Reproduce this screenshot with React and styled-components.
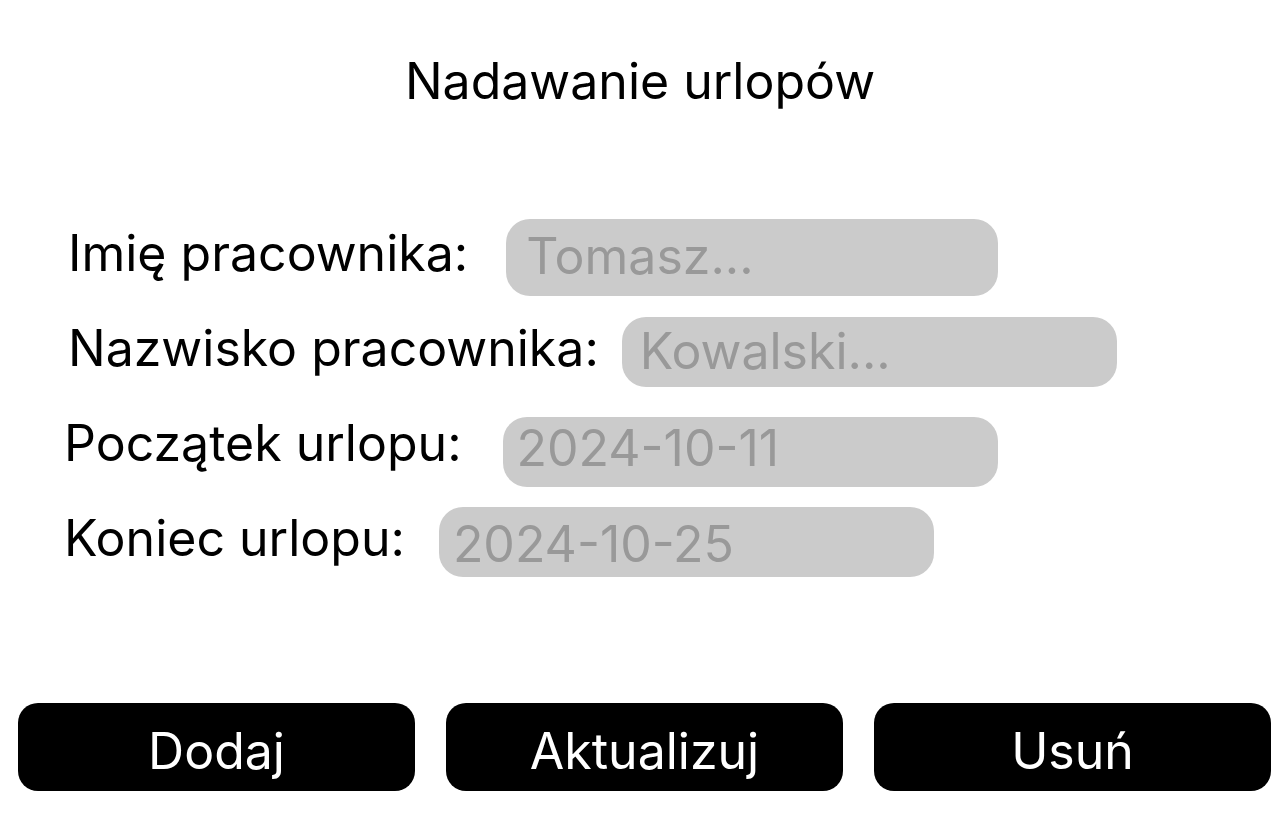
import React from "react";
import styled, { createGlobalStyle } from "styled-components";

const GlobalStyle = createGlobalStyle`
  * { box-sizing: border-box; }
  body {
    margin: 0;
    background: #ffffff;
    color: #000000;
    font-family: Inter, "Liberation Sans", sans-serif;
    font-size: 50px;
    line-height: 60px;
  }
`;

const Page = styled.main`
  min-height: 100vh;
  padding-top: 51px;
  padding-bottom: 40px;
`;

const Title = styled.h1`
  margin: 0;
  font-size: 50px;
  font-weight: 400;
  line-height: 60px;
  text-align: center;
`;

const Form = styled.form`
  display: flex;
  flex-direction: column;
`;

const Fields = styled.div`
  display: flex;
  flex-direction: column;
  padding: 108px 64px 0;
`;

const Row = styled.div`
  display: flex;
  align-items: flex-start;
  gap: ${({ $gap }) => $gap}px;
  margin-bottom: ${({ $after }) => $after}px;
  padding-left: ${({ $indent }) => $indent}px;
`;

const Label = styled.label`
  flex: none;
  padding-top: ${({ $drop }) => $drop}px;
  line-height: 60px;
`;

const Input = styled.input`
  flex: 0 1 ${({ $width }) => $width}px;
  min-width: 0;
  height: ${({ $height }) => $height}px;
  margin: ${({ $top }) => $top}px 0 0;
  padding: ${({ $pad }) => $pad};
  border: 0;
  border-radius: 24px;
  background: #cbcbcb;
  color: #000000;
  font: inherit;

  &::placeholder {
    color: #999999;
    opacity: 1;
  }
`;

const Actions = styled.div`
  display: grid;
  grid-template-columns: repeat(3, 1fr);
  gap: 31px;
  margin-top: 126px;
  padding: 0 9px 0 18px;
`;

const Button = styled.button`
  height: 88px;
  padding: 8px 0 0;
  border: 0;
  border-radius: 20px;
  background: #000000;
  color: #ffffff;
  font: inherit;
  cursor: pointer;
`;

const fields = [
  { id: "imie", label: "Imię pracownika:", hint: "Tomasz...", indent: 4, gap: 38, drop: 4, top: 0, width: 492, height: 77, pad: "0 20px 4px", after: 21 },
  { id: "nazwisko", label: "Nazwisko pracownika:", hint: "Kowalski...", indent: 4, gap: 23, drop: 1, top: 0, width: 495, height: 70, pad: "0 18px 2px", after: 26 },
  { id: "poczatek", label: "Początek urlopu:", hint: "2024-10-11", indent: 0, gap: 41, drop: 0, top: 4, width: 495, height: 70, pad: "0 14px 8px", after: 20 },
  { id: "koniec", label: "Koniec urlopu:", hint: "2024-10-25", indent: 0, gap: 34, drop: 1, top: 0, width: 495, height: 70, pad: "4px 14px 0", after: 0 },
];

export default function App() {
  return (
    <>
      <GlobalStyle />
      <Page>
        <Title>Nadawanie urlopów</Title>
        <Form onSubmit={(event) => event.preventDefault()}>
          <Fields>
            {fields.map((f) => (
              <Row key={f.id} $gap={f.gap} $after={f.after} $indent={f.indent}>
                <Label htmlFor={f.id} $drop={f.drop}>{f.label}</Label>
                <Input id={f.id} type="text" placeholder={f.hint} $top={f.top} $width={f.width} $height={f.height} $pad={f.pad} />
              </Row>
            ))}
          </Fields>
          <Actions>
            <Button type="submit">Dodaj</Button>
            <Button type="button">Aktualizuj</Button>
            <Button type="button">Usuń</Button>
          </Actions>
        </Form>
      </Page>
    </>
  );
}
